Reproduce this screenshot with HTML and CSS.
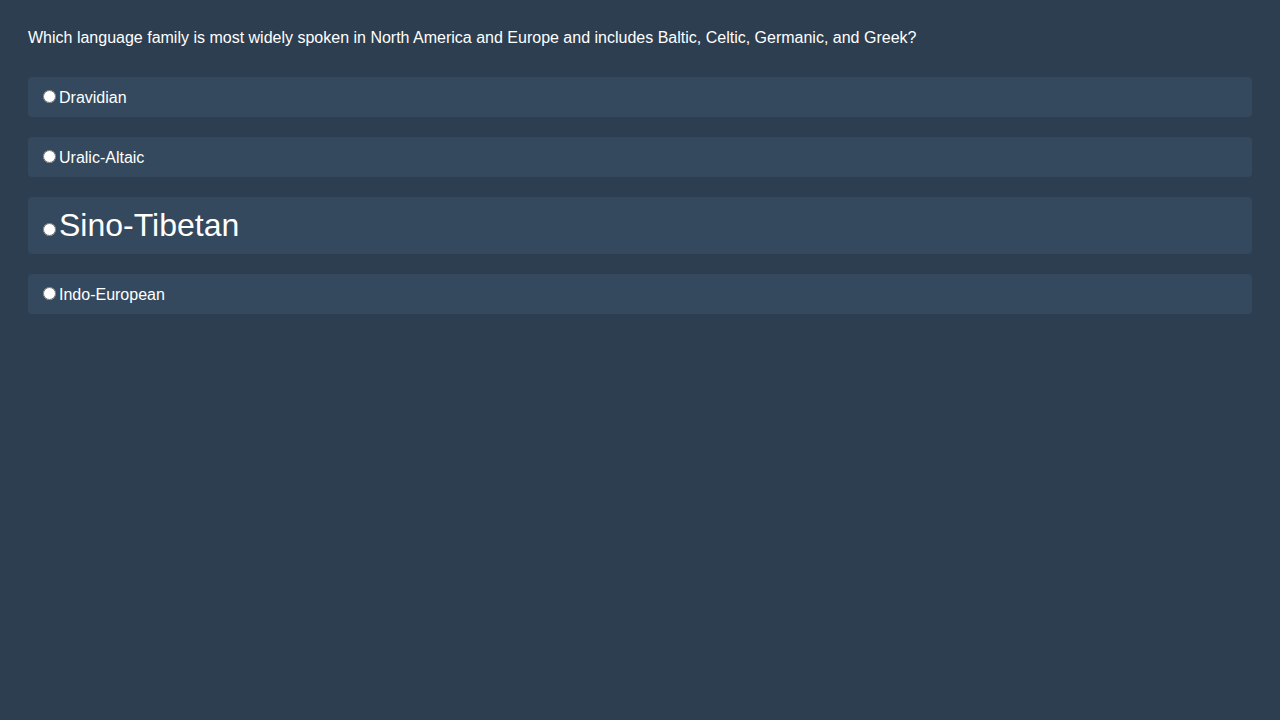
FILE: index.html
```html
<!DOCTYPE html>
<html>
<head>
<meta charset="utf-8">
<link rel="stylesheet" href="styles.css">
</head>
<body>
<div class="quiz">
  <div class="question">Which language family is most widely spoken in North America and Europe and includes Baltic, Celtic, Germanic, and Greek?</div>
  <div class="options">
    <label class="option"><input type="radio" name="q">Dravidian</label>
    <label class="option"><input type="radio" name="q">Uralic-Altaic</label>
    <label class="option big"><input type="radio" name="q">Sino-Tibetan</label>
    <label class="option"><input type="radio" name="q">Indo-European</label>
  </div>
</div>
</body>
</html>
```
FILE: styles.css
```css
html, body {
  background: #2c3e50;
}
body {
  margin: 8px;
  font-family: "Liberation Sans", Arial, sans-serif;
  font-size: 16px;
  color: #ffffff;
}
.quiz {
  padding: 20px;
}
.question {
  padding-top: 1px;
  margin-bottom: 30px;
}
.options {
  display: flex;
  flex-direction: column;
  gap: 20px;
}
.option {
  display: block;
  background: #34495e;
  border-radius: 4px;
  padding: 10px;
}
.option.big {
  font-size: 32px;
}
```
